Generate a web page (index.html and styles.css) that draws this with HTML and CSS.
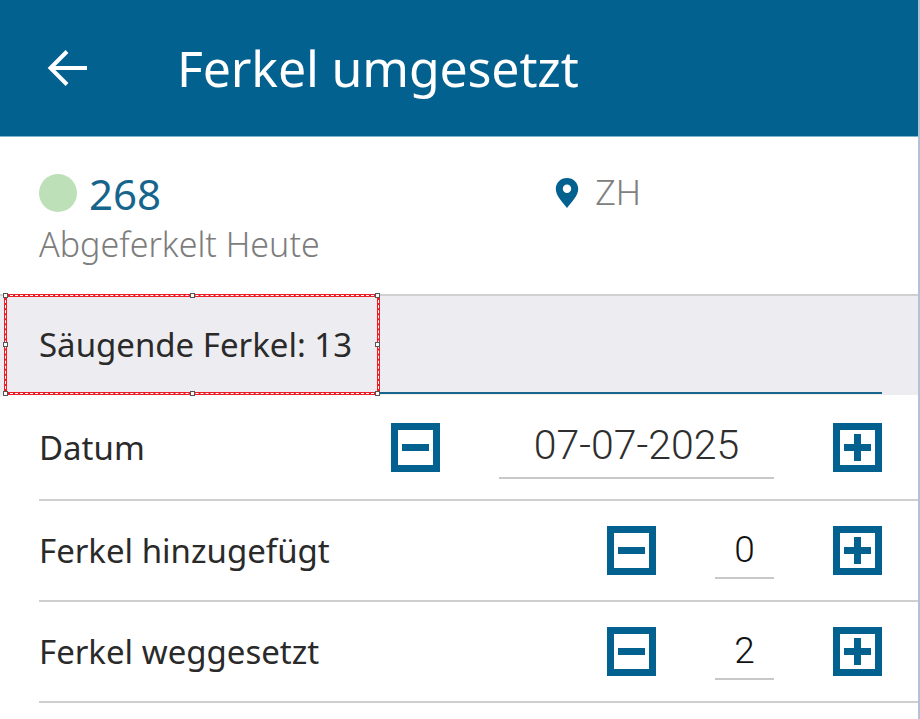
FILE: index.html
```html
<!DOCTYPE html>
<html lang="de">
<head>
  <meta charset="UTF-8">
  <title>Ferkel umgesetzt</title>
  <link rel="stylesheet" href="styles.css">
</head>
<body>

<div class="screen">
  <header class="app-bar">
    <svg class="back" width="44" height="44" viewBox="0 0 44 44">
      <path d="M41 22H5M21 5.500L4.500 22 21 38.500" fill="none" stroke="#fff" stroke-width="4"/>
    </svg>
    <h1>Ferkel umgesetzt</h1>
  </header>

  <section class="info">
    <div class="info-main">
      <div class="sow">
        <span class="dot"></span>
        <span class="sow-id">268</span>
      </div>
      <div class="status">Abgeferkelt Heute</div>
    </div>
    <div class="place">
      <svg width="24" height="32" viewBox="0 0 24 32">
        <path fill-rule="evenodd" fill="#03618f" d="M12 1C5.600 1 .8 5.800.8 12c0 7 7.200 13.500 11.200 19 4-5.500 11.200-12 11.200-19C23.200 5.800 18.400 1 12 1zm0 15a4.200 4.200 0 1 1 0-8.400 4.200 4.200 0 0 1 0 8.400z"/>
      </svg>
      <span>ZH</span>
    </div>
  </section>

  <div class="suckling">
    <div class="suckling-inner">Säugende Ferkel: 13</div>
    <div class="selection">
      <i class="handle tl"></i><i class="handle tc"></i><i class="handle tr"></i>
      <i class="handle ml"></i><i class="handle mr"></i>
      <i class="handle bl"></i><i class="handle bc"></i><i class="handle br"></i>
    </div>
  </div>

  <div class="row row-date">
    <span class="label">Datum</span>
    <div class="stepper date-stepper">
      <button class="step minus"></button>
      <span class="value date">07-07-2025</span>
      <button class="step plus"></button>
    </div>
  </div>

  <div class="row">
    <span class="label">Ferkel hinzugefügt</span>
    <div class="stepper">
      <button class="step minus"></button>
      <span class="value">0</span>
      <button class="step plus"></button>
    </div>
  </div>

  <div class="row">
    <span class="label">Ferkel weggesetzt</span>
    <div class="stepper">
      <button class="step minus"></button>
      <span class="value">2</span>
      <button class="step plus"></button>
    </div>
  </div>
</div>

</body>
</html>
```

FILE: styles.css
```css
* {
  box-sizing: border-box;
}

html, body {
  margin: 0;
  padding: 0;
  background-color: #fff;
  font-family: "Noto Sans", sans-serif;
}

.screen {
  width: 920px;
  height: 719px;
  overflow: hidden;
  border-right: 2px solid #b4c0d4;
}

.app-bar {
  display: flex;
  align-items: center;
  height: 137px;
  padding-left: 46px;
  background-color: #03618f;
  border-bottom: 1px solid #7fb4cf;
  color: #fff;
}

.app-bar h1 {
  margin: 0 0 0 87px;
  font-size: 50px;
  font-weight: 400;
  letter-spacing: -0.15px;
}

.back {
  flex: none;
}

.info {
  display: flex;
  height: 157px;
  padding: 34px 0 0 39px;
}

.info-main {
  width: 516px;
}

.sow {
  display: flex;
  align-items: center;
  gap: 12px;
  height: 44px;
}

.dot {
  width: 38px;
  height: 38px;
  border-radius: 50%;
  background-color: #bde0b8;
}

.sow-id {
  font-size: 42px;
  color: #17658c;
}

.status {
  margin-top: 6px;
  font-size: 34px;
  font-weight: 300;
  color: #7d7d7d;
}

.place {
  display: flex;
  align-items: center;
  gap: 16px;
  height: 44px;
  font-family: "Roboto", sans-serif;
  font-size: 35px;
  font-weight: 300;
  color: #808080;
}

.suckling {
  position: relative;
  height: 101px;
  border-top: 2px solid #d0d0d0;
  background-color: #ededf1;
}

.suckling-inner {
  height: 98px;
  margin: 0 36px 0 39px;
  line-height: 98px;
  font-size: 33px;
  color: #2a2a2a;
  border-bottom: 2px solid #17658c;
}

/* Auswahlrahmen aus dem Screenshot */
.selection {
  position: absolute;
  left: 4px;
  top: -2px;
  width: 376px;
  height: 101px;
  border: 3px solid #ee1c25;
  outline: 1px dashed #fff;
  outline-offset: -2px;
}

.handle {
  position: absolute;
  width: 5px;
  height: 5px;
  background-color: #fff;
  border: 1px solid #555;
}

.tl { left: -4px; top: -4px; }
.tc { left: 183px; top: -4px; }
.tr { right: -3px; top: -4px; }
.ml { left: -4px; top: 45px; }
.mr { right: -3px; top: 45px; }
.bl { left: -4px; bottom: -4px; }
.bc { left: 183px; bottom: -4px; }
.br { right: -3px; bottom: -4px; }

.row {
  display: flex;
  align-items: center;
  justify-content: space-between;
  height: 101px;
  margin-left: 39px;
  padding-right: 36px;
  border-bottom: 2px solid #cfcfcf;
}

.row-date {
  height: 106px;
}

.label {
  font-size: 33px;
  color: #2a2a2a;
}

.stepper {
  display: flex;
  align-items: center;
  width: 275px;
  justify-content: space-between;
}

.date-stepper {
  width: 491px;
}

.step {
  position: relative;
  width: 49px;
  height: 49px;
  padding: 0;
  border: 7px solid #03618f;
  border-radius: 0;
  background-color: #fff;
}

.step::before,
.plus::after {
  content: "";
  position: absolute;
  background-color: #03618f;
}

.step::before {
  left: 4px;
  right: 4px;
  top: 14px;
  height: 7px;
}

.plus::after {
  top: 4px;
  bottom: 4px;
  left: 14px;
  width: 7px;
}

.value {
  width: 59px;
  height: 56px;
  text-align: center;
  font-family: "Roboto", sans-serif;
  font-size: 37px;
  font-weight: 300;
  line-height: 54px;
  color: #111;
  border-bottom: 2px solid #c8c8c8;
}

.date {
  width: 275px;
  height: 64px;
  font-size: 41px;
  line-height: 61px;
  color: #2e2e2e;
}
```
